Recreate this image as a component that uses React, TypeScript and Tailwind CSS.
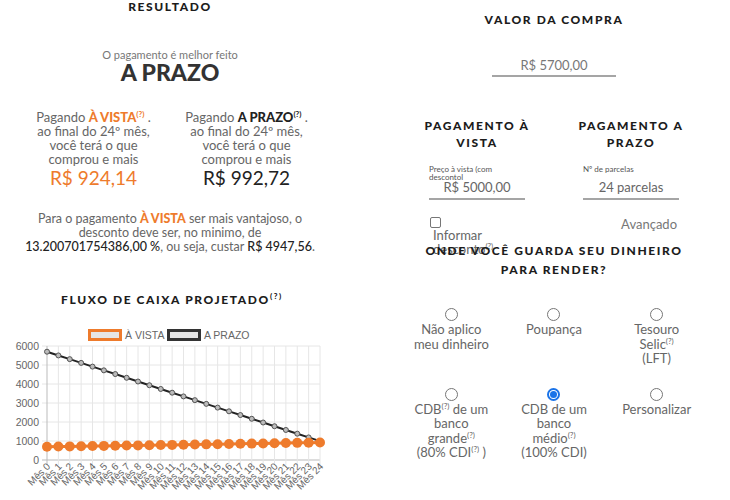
const ORANGE = '#ee7b2c';

const vista = Array.from({ length: 25 }, (_, i) => 700 * Math.pow(924.14 / 700, i / 24));
const prazo = Array.from({ length: 25 }, (_, i) => 5700 - (i * (5700 - 992.72)) / 24);

const px = (i: number) => 47 + i * 11.375;
const py = (v: number) => 135 - v * 0.019;

function Q() {
  return <span className="relative -top-[5px] text-[8px] leading-none">(?)</span>;
}

function Heading({ children, className = '' }: { children: React.ReactNode; className?: string }) {
  return (
    <div
      className={`text-center text-[12px] font-black tracking-[1.6px] text-[#1c1c1c] ${className}`}
      style={{ fontFamily: 'Lato, "Open Sans", sans-serif' }}
    >
      {children}
    </div>
  );
}

function Chart() {
  return (
    <svg width="330" height="175" className="block" style={{ fontFamily: '"Liberation Sans", Arial, sans-serif' }}>
      {/* legend */}
      <rect x="89.5" y="5.5" width="31" height="9" fill="#e6e6e6" stroke={ORANGE} strokeWidth="3" />
      <text x="125" y="14" fontSize="10.5" fill="#666">À VISTA</text>
      <rect x="168.5" y="5.5" width="31" height="9" fill="#e6e6e6" stroke="#333" strokeWidth="3" />
      <text x="204" y="14" fontSize="10.5" fill="#666">A PRAZO</text>

      {/* grid */}
      {[0, 1, 2, 3, 4, 5, 6].map((k) => (
        <g key={k}>
          <line x1="42" x2="320" y1={py(k * 1000)} y2={py(k * 1000)} stroke={k === 0 ? '#bbb' : '#e6e6e6'} />
          <text x="39" y={py(k * 1000) + 4} fontSize="10.5" fill="#666" textAnchor="end">{k * 1000}</text>
        </g>
      ))}
      {vista.map((_, i) => (
        <line key={i} x1={px(i)} x2={px(i)} y1="21" y2="140" stroke={i === 0 ? '#bbb' : '#e6e6e6'} />
      ))}

      {/* a prazo */}
      <polyline points={prazo.map((v, i) => `${px(i)},${py(v)}`).join(' ')} fill="none" stroke="#222" strokeWidth="2" />
      {prazo.map((v, i) => (
        <circle key={i} cx={px(i)} cy={py(v)} r="2.5" fill="#bbb" stroke="#555" strokeWidth="1" />
      ))}

      {/* a vista */}
      <polyline points={vista.map((v, i) => `${px(i)},${py(v)}`).join(' ')} fill="none" stroke={ORANGE} strokeWidth="3" />
      {vista.map((v, i) => (
        <circle key={i} cx={px(i)} cy={py(v)} r="5" fill={ORANGE} />
      ))}

      {/* x labels */}
      {vista.map((_, i) => (
        <text key={i} fontSize="10" fill="#666" textAnchor="end" transform={`translate(${px(i) + 4},142) rotate(-45)`}>
          Mês {i}
        </text>
      ))}
    </svg>
  );
}

function Radio({ checked = false }: { checked?: boolean }) {
  return checked ? (
    <div className="mx-auto flex h-[13px] w-[13px] items-center justify-center rounded-full border-2 border-[#1a73e8] bg-white">
      <div className="h-[7px] w-[7px] rounded-full bg-[#1a73e8]" />
    </div>
  ) : (
    <div className="mx-auto h-[13px] w-[13px] rounded-full border border-[#767676] bg-white" />
  );
}

function Option({ checked, children }: { checked?: boolean; children: React.ReactNode }) {
  return (
    <div className="flex flex-col items-center">
      <Radio checked={checked} />
      <div className="mt-[1px] text-center text-[13px] leading-[14.5px] text-[#666]">{children}</div>
    </div>
  );
}

export default function App() {
  return (
    <div
      className="flex h-[500px] w-[730px] overflow-hidden bg-white text-[#666]"
      style={{ fontFamily: 'Lato, "Open Sans", sans-serif' }}
    >
      {/* left: resultado */}
      <div className="flex w-[365px] flex-col">
        <div className="w-[340px]">
          <Heading className="leading-[14px]">RESULTADO</Heading>
          <div className="mt-[34px] text-center text-[11px] leading-[13px] text-[#777]">O pagamento é melhor feito</div>
          <div className="mt-[1px] text-center text-[23px] font-black leading-[20px] text-[#333]">A PRAZO</div>

          <div className="mx-[17px] mt-[28px] grid grid-cols-2 text-center text-[13px] leading-[14px]">
            <div>
              <div>
                Pagando <b className="font-black text-[#ee7b2c]">À VISTA</b>
                <b className="text-[#ee7b2c]"><Q /></b> .
              </div>
              <div>ao final do 24º mês,</div>
              <div>você terá o que</div>
              <div>comprou e mais</div>
              <div className="mt-[1px] text-[19px] leading-[22px] text-[#ee7b2c]">R$ 924,14</div>
            </div>
            <div>
              <div>
                Pagando <b className="font-black text-[#222]">A PRAZO</b>
                <b className="text-[#222]"><Q /></b> .
              </div>
              <div>ao final do 24º mês,</div>
              <div>você terá o que</div>
              <div>comprou e mais</div>
              <div className="mt-[1px] text-[19px] leading-[22px] text-[#222]">R$ 992,72</div>
            </div>
          </div>

          <div className="mt-[23px] text-center text-[12.5px] leading-[14px]">
            <div>
              Para o pagamento <b className="font-black text-[#ee7b2c]">À VISTA</b> ser mais vantajoso, o
            </div>
            <div>desconto deve ser, no minimo, de</div>
            <div>
              <span className="font-medium text-[#222]">13.200701754386,00 %</span>, ou seja, custar{' '}
              <span className="font-medium text-[#222]">R$ 4947,56</span>.
            </div>
          </div>

          <Heading className="mt-[39px] pl-[4px] leading-[14px]">
            FLUXO DE CAIXA PROJETADO<Q />
          </Heading>
        </div>
        <div className="mt-[18px]">
          <Chart />
        </div>
      </div>

      {/* right: entrada */}
      <div className="flex w-[365px] flex-col pl-[35px] pr-[22px]">
        <Heading className="pt-[13px] leading-[14px]">VALOR DA COMPRA</Heading>
        <div className="mx-auto mt-[30px] h-[20px] w-[124px] border-b-2 border-[#a5a5a5] text-center text-[13px] leading-[16px] text-[#777]">
          R$ 5700,00
        </div>

        <div className="mt-[40px] grid grid-cols-2">
          <div className="flex flex-col items-center">
            <Heading className="leading-[17px]">
              PAGAMENTO À
              <br />
              VISTA
            </Heading>
            <div className="mt-[14px] w-[96px]">
              <div className="h-[15px] text-[8px] leading-[8px] text-[#555]">
                Preço à vista (com
                <br />
                descontol
              </div>
              <div className="border-b-2 border-[#a5a5a5] pb-[4px] text-center text-[13px] leading-[14px] text-[#666]">R$ 5000,00</div>
            </div>
          </div>
          <div className="flex flex-col items-center">
            <Heading className="leading-[17px]">
              PAGAMENTO A
              <br />
              PRAZO
            </Heading>
            <div className="mt-[14px] w-[96px]">
              <div className="h-[15px] text-[8px] leading-[8px] text-[#555]">Nº de parcelas</div>
              <div className="border-b-2 border-[#a5a5a5] pb-[4px] text-center text-[13px] leading-[14px] text-[#666]">24 parcelas</div>
            </div>
          </div>
        </div>

        <div className="mt-[17px] grid h-[24px] grid-cols-2">
          <div className="pl-[30px]">
            <div className="h-[11px] w-[11px] rounded-[2px] border border-[#767676]" />
            <div className="ml-[3px] text-[13px] leading-[14px] text-[#666]">
              Informar
              <br />
              desconto<Q />
            </div>
          </div>
          <div className="pr-[31px] text-right text-[13px] leading-[14px] text-[#777]">Avançado</div>
        </div>

        <Heading className="relative leading-[19px]">
          ONDE VOCÊ GUARDA SEU DINHEIRO
          <br />
          PARA RENDER?
        </Heading>

        <div className="mt-[29px] grid grid-cols-3 gap-y-[22px]">
          <Option>
            Não aplico
            <br />
            meu dinheiro
          </Option>
          <Option>Poupança</Option>
          <Option>
            Tesouro
            <br />
            Selic<Q />
            <br />
            (LFT)
          </Option>
          <Option>
            CDB<Q /> de um
            <br />
            banco
            <br />
            grande<Q />
            <br />
            (80% CDI<Q /> )
          </Option>
          <Option checked>
            CDB de um
            <br />
            banco
            <br />
            médio<Q />
            <br />
            (100% CDI)
          </Option>
          <Option>Personalizar</Option>
        </div>
      </div>
    </div>
  );
}
